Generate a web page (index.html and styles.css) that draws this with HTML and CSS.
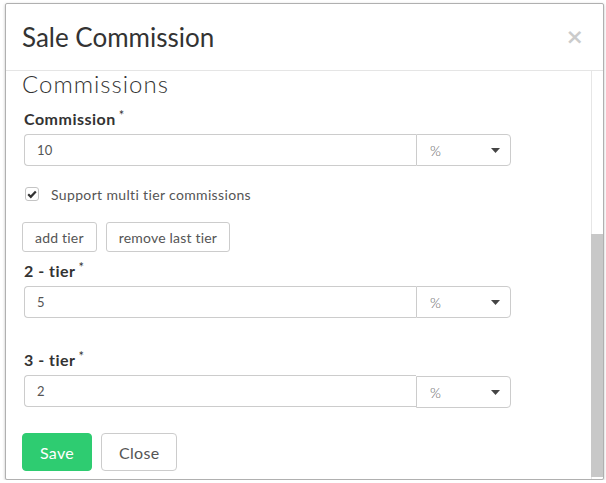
FILE: index.html
```html
<!DOCTYPE html>
<html lang="en">
<head>
<meta charset="utf-8">
<title>Sale Commission</title>
<link rel="stylesheet" href="styles.css">
</head>
<body>
<div class="modal">
  <div class="modal-header">
    <h4 class="modal-title">Sale Commission</h4>
    <button class="close" type="button">&times;</button>
  </div>
  <div class="modal-main">
    <div class="modal-body">
      <h3 class="section-title">Commissions</h3>

      <div class="field field-first">
        <label class="field-label">Commission<sup>*</sup></label>
        <div class="input-group">
          <input class="input" type="text" value="10">
          <div class="select"><span>%</span><svg class="caret" width="9" height="5" viewBox="0 0 9 5"><polygon points="0,0 9,0 4.5,5"/></svg></div>
        </div>
      </div>

      <label class="check-row">
        <span class="checkbox"><svg width="12" height="12" viewBox="0 0 12 12"><path d="M2.2 6.2 L4.8 8.8 L9.8 3.4"/></svg></span>
        <span class="check-text">Support multi tier commissions</span>
      </label>

      <div class="tier-actions">
        <button class="btn" type="button">add tier</button>
        <button class="btn" type="button">remove last tier</button>
      </div>

      <div class="field field-tier2">
        <label class="field-label">2 - tier<sup>*</sup></label>
        <div class="input-group">
          <input class="input" type="text" value="5">
          <div class="select"><span>%</span><svg class="caret" width="9" height="5" viewBox="0 0 9 5"><polygon points="0,0 9,0 4.5,5"/></svg></div>
        </div>
      </div>

      <div class="field field-tier3">
        <label class="field-label">3 - tier<sup>*</sup></label>
        <div class="input-group">
          <input class="input" type="text" value="2">
          <div class="select select-low"><span>%</span><svg class="caret" width="9" height="5" viewBox="0 0 9 5"><polygon points="0,0 9,0 4.5,5"/></svg></div>
        </div>
      </div>

      <div class="footer-actions">
        <button class="btn-lg btn-save" type="button">Save</button>
        <button class="btn-lg btn-close" type="button">Close</button>
      </div>
    </div>
    <div class="scrollbar"><div class="thumb"></div></div>
  </div>
</div>
</body>
</html>
```

FILE: styles.css
```css
* { box-sizing: border-box; }

body {
  margin: 0;
  background: #fff;
  font-family: Lato, "Open Sans", sans-serif;
  color: #333;
}

.modal {
  margin: 3px 0 0 5px;
  width: 599px;
  height: 477px;
  border: 1px solid #b0b0b0;
  border-radius: 2px;
  box-shadow: 0 1px 3px rgba(0, 0, 0, 0.25);
  background: #fff;
  display: flex;
  flex-direction: column;
}

.modal-header {
  height: 67px;
  flex: none;
  border-bottom: 1px solid #e5e5e5;
  display: flex;
  align-items: center;
  justify-content: space-between;
  padding: 0 19px 0 16px;
}

.modal-title {
  margin: 0;
  font-size: 26px;
  font-weight: 400;
  color: #333;
}

.close {
  border: 0;
  background: none;
  padding: 0;
  font-family: "DejaVu Sans", sans-serif;
  font-size: 22px;
  font-weight: bold;
  line-height: 1;
  color: #000;
  opacity: 0.2;
}

.modal-main {
  flex: 1;
  display: flex;
  min-height: 0;
}

.modal-body {
  flex: 1;
  padding: 0 0 0 16px;
}

.scrollbar {
  width: 12px;
  flex: none;
  border-left: 1px solid #e6e6e6;
  padding-top: 163px;
}

.thumb {
  height: 243px;
  margin-left: -1px;
  background: #c8c8c8;
}

.section-title {
  margin: 0;
  font-size: 24px;
  line-height: 26px;
  font-weight: 300;
  letter-spacing: 1px;
  color: #333;
}

.field { margin-left: 2px; }
.field-first { margin-top: 12px; }
.field-tier2 { margin-top: 9px; }
.field-tier3 { margin-top: 32px; }

.field-label {
  display: block;
  font-size: 16px;
  line-height: 20px;
  font-weight: 700;
  letter-spacing: 0.5px;
  color: #333;
  margin-bottom: 5px;
}

.field-label sup {
  font-size: 13px;
  font-weight: 400;
  margin-left: 3px;
  vertical-align: 5px;
  line-height: 0;
}

.input-group {
  display: flex;
  width: 487px;
  align-items: flex-start;
}

.input {
  flex: 1;
  height: 32px;
  border: 1px solid #ccc;
  border-right: 0;
  border-radius: 4px 0 0 4px;
  padding: 0 12px;
  font-family: inherit;
  font-size: 13px;
  letter-spacing: 0.3px;
  color: #555;
  background: #fff;
  outline: none;
}

.select {
  width: 95px;
  height: 32px;
  border: 1px solid #ccc;
  border-radius: 0 4px 4px 0;
  display: flex;
  align-items: center;
  justify-content: space-between;
  padding: 0 10px 0 13px;
  font-size: 14px;
  font-weight: 300;
  color: #666;
}

.select-low { margin-top: 1px; }

.caret { fill: #444; }

.check-row {
  margin: 18px 0 0 3px;
  height: 20px;
  display: flex;
  align-items: center;
  gap: 12px;
  font-size: 14px;
  letter-spacing: 0.35px;
  color: #555;
}

.checkbox {
  width: 14px;
  height: 14px;
  border: 1px solid #c4c4c4;
  border-radius: 3px;
  display: flex;
  align-items: center;
  justify-content: center;
}

.checkbox path {
  fill: none;
  stroke: #333;
  stroke-width: 2.2;
}

.tier-actions {
  margin-top: 18px;
  display: flex;
  gap: 9px;
}

.btn {
  height: 30px;
  padding: 0 12px;
  border: 1px solid #ccc;
  border-radius: 3px;
  background: #fff;
  font-family: inherit;
  font-size: 14px;
  letter-spacing: 0.2px;
  color: #555;
}

.footer-actions {
  margin-top: 25px;
  display: flex;
  gap: 9px;
}

.btn-lg {
  height: 38px;
  padding: 0 17px;
  border-radius: 4px;
  font-family: inherit;
  font-size: 16px;
  letter-spacing: 0.3px;
}

.btn-save {
  border: 1px solid #2ecc71;
  background: #2ecc71;
  color: #fff;
}

.btn-close {
  border: 1px solid #ccc;
  background: #fff;
  color: #555;
}
```
